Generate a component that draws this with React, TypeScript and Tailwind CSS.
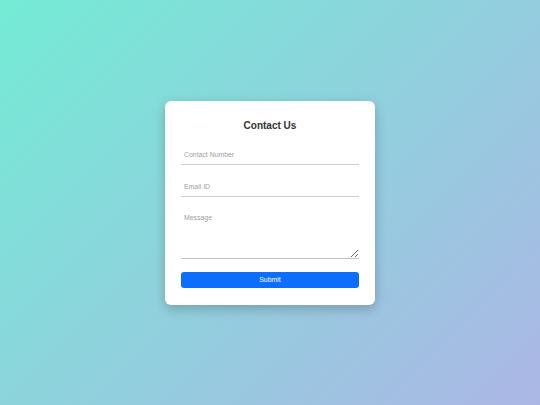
export default function App() {
  return (
    <div className="h-[405px] w-full flex items-center justify-center bg-[linear-gradient(135deg,#74ebd5,#acb6e5)] font-['Liberation_Sans',Arial,sans-serif]">
      <form
        className="w-[210px] bg-white rounded-[6px] shadow-[0_4px_12px_rgba(0,0,0,0.22)] px-[16px] pt-[19px] pb-[16px] flex flex-col"
        onSubmit={(e) => e.preventDefault()}
      >
        <h2 className="text-[10px] leading-[12px] font-bold text-[#333] text-center mb-[13px]">Contact Us</h2>
        <input
          type="text"
          placeholder="Contact Number"
          className="block w-full h-[20px] px-[3px] text-[6.9px] text-[#333] border-0 border-b border-[#ccc] outline-none placeholder:text-[#a0a0a0]"
        />
        <input
          type="email"
          placeholder="Email ID"
          className="block w-full h-[20px] mt-[12px] px-[3px] text-[6.9px] text-[#333] border-0 border-b border-[#ccc] outline-none placeholder:text-[#a0a0a0]"
        />
        <textarea
          placeholder="Message"
          className="block w-full h-[50px] mt-[12px] px-[3px] py-[5px] text-[6.9px] leading-[8px] text-[#333] border-0 border-b border-[#c4c4c4] outline-none placeholder:text-[#a0a0a0]"
        />
        <button
          type="submit"
          className="mt-[13px] mb-[1px] h-[16px] w-full rounded-[3px] bg-[#0d6efd] text-white text-[6.9px] leading-[16px]"
        >
          Submit
        </button>
      </form>
    </div>
  );
}
